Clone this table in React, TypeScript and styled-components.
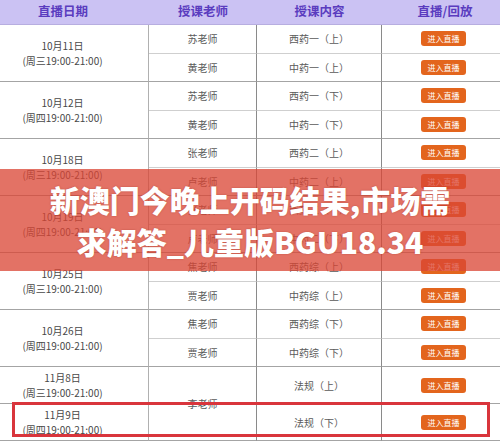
import React from "react";
import styled, { createGlobalStyle } from "styled-components";

const GlobalStyle = createGlobalStyle`
  html, body { margin: 0; padding: 0; background: #ffffff; }
  body { font-family: "Noto Sans CJK SC", "Noto Sans", sans-serif; }
`;

const Page = styled.div`
  position: relative;
  width: 500px;
  height: 441px;
  overflow: hidden;
  background: #ffffff;
`;

const Grid = styled.div`
  display: grid;
  margin-left: -23px;
  width: 531px;
  grid-template-columns: 172px 108px 125px 126px;
  grid-template-rows: 25px repeat(12, 28.5px) 37px 37px;
`;

const HeaderCell = styled.div`
  background: #cbc2f3;
  color: #5a3cbf;
  font-size: 12.5px;
  font-weight: 700;
  display: flex;
  align-items: center;
  justify-content: center;
  padding-bottom: 3px;
  box-sizing: border-box;
  border-bottom: 1px solid #b7aee0;
`;

const Cell = styled.div<{ $span?: number; $end?: boolean; $last?: boolean }>`
  grid-row: span ${(p) => p.$span ?? 1};
  display: flex;
  align-items: center;
  justify-content: center;
  box-sizing: border-box;
  border-bottom: 1px solid ${(p) => (p.$end ? "#a4a4a4" : "#cfcfcf")};
  border-right: ${(p) => (p.$last ? "none" : "1px solid #8a8a8a")};
  font-size: 10px;
  color: #5a5a5a;
`;

const DateCell = styled(Cell)`
  flex-direction: column;
  line-height: 15px;
  color: #484848;
  border-right-color: #b0b0b0;
`;

const LiveButton = styled.span`
  display: flex;
  align-items: center;
  justify-content: center;
  width: 45px;
  height: 15px;
  border-radius: 3px;
  background: #e3651d;
  color: #ffffff;
  font-size: 8px;
  margin-left: -3px;
`;

const Band = styled.div`
  position: absolute;
  left: 0;
  right: 0;
  top: 169px;
  height: 102px;
  background: rgba(218, 70, 52, 0.76);
  display: flex;
  flex-direction: column;
  align-items: center;
  justify-content: center;
`;

const Title = styled.div`
  color: #ffffff;
  font-size: 30px;
  font-weight: 900;
  line-height: 42px;
  text-align: center;
  width: 420px;
  text-shadow: 0 0 2px rgba(120, 20, 10, 0.35);
`;

const Highlight = styled.div`
  position: absolute;
  left: 12px;
  top: 402px;
  width: 478px;
  height: 35px;
  border: 3px solid #d9353c;
  box-sizing: border-box;
`;

type Group = {
  date: string;
  week: string;
  rows: { teacher: string; content: string }[];
};

const groups: Group[] = [
  { date: "10月11日", week: "(周三19:00-21:00)", rows: [{ teacher: "苏老师", content: "西药一（上）" }, { teacher: "黄老师", content: "中药一（上）" }] },
  { date: "10月12日", week: "(周四19:00-21:00)", rows: [{ teacher: "苏老师", content: "西药一（下）" }, { teacher: "黄老师", content: "中药一（下）" }] },
  { date: "10月18日", week: "(周三19:00-21:00)", rows: [{ teacher: "张老师", content: "西药二（上）" }, { teacher: "卢老师", content: "中药二（上）" }] },
  { date: "10月19日", week: "(周四19:00-21:00)", rows: [{ teacher: "张老师", content: "西药二（下）" }, { teacher: "卢老师", content: "中药二（下）" }] },
  { date: "10月25日", week: "(周三19:00-21:00)", rows: [{ teacher: "焦老师", content: "西药综（上）" }, { teacher: "贾老师", content: "中药综（上）" }] },
  { date: "10月26日", week: "(周四19:00-21:00)", rows: [{ teacher: "焦老师", content: "西药综（下）" }, { teacher: "贾老师", content: "中药综（下）" }] },
];

export default function App() {
  return (
    <>
      <GlobalStyle />
      <Page>
        <Grid>
          <HeaderCell>直播日期</HeaderCell>
          <HeaderCell>授课老师</HeaderCell>
          <HeaderCell>授课内容</HeaderCell>
          <HeaderCell>直播/回放</HeaderCell>
          {groups.map((g) => (
            <React.Fragment key={g.date}>
              <DateCell $span={2} $end>
                <span>{g.date}</span>
                <span>{g.week}</span>
              </DateCell>
              {g.rows.map((r, i) => (
                <React.Fragment key={r.content}>
                  <Cell $end={i === 1}>{r.teacher}</Cell>
                  <Cell $end={i === 1}>{r.content}</Cell>
                  <Cell $end={i === 1} $last>
                    <LiveButton>进入直播</LiveButton>
                  </Cell>
                </React.Fragment>
              ))}
            </React.Fragment>
          ))}
          <DateCell $end>
            <span>11月8日</span>
            <span>(周三19:00-21:00)</span>
          </DateCell>
          <Cell $span={2} $end>李老师</Cell>
          <Cell $end>法规（上）</Cell>
          <Cell $end $last>
            <LiveButton>进入直播</LiveButton>
          </Cell>
          <DateCell $end>
            <span>11月9日</span>
            <span>(周四19:00-21:00)</span>
          </DateCell>
          <Cell $end>法规（下）</Cell>
          <Cell $end $last>
            <LiveButton>进入直播</LiveButton>
          </Cell>
        </Grid>
        <Band>
          <Title>新澳门今晚上开码结果,市场需求解答_儿童版BGU18.34</Title>
        </Band>
        <Highlight />
      </Page>
    </>
  );
}
